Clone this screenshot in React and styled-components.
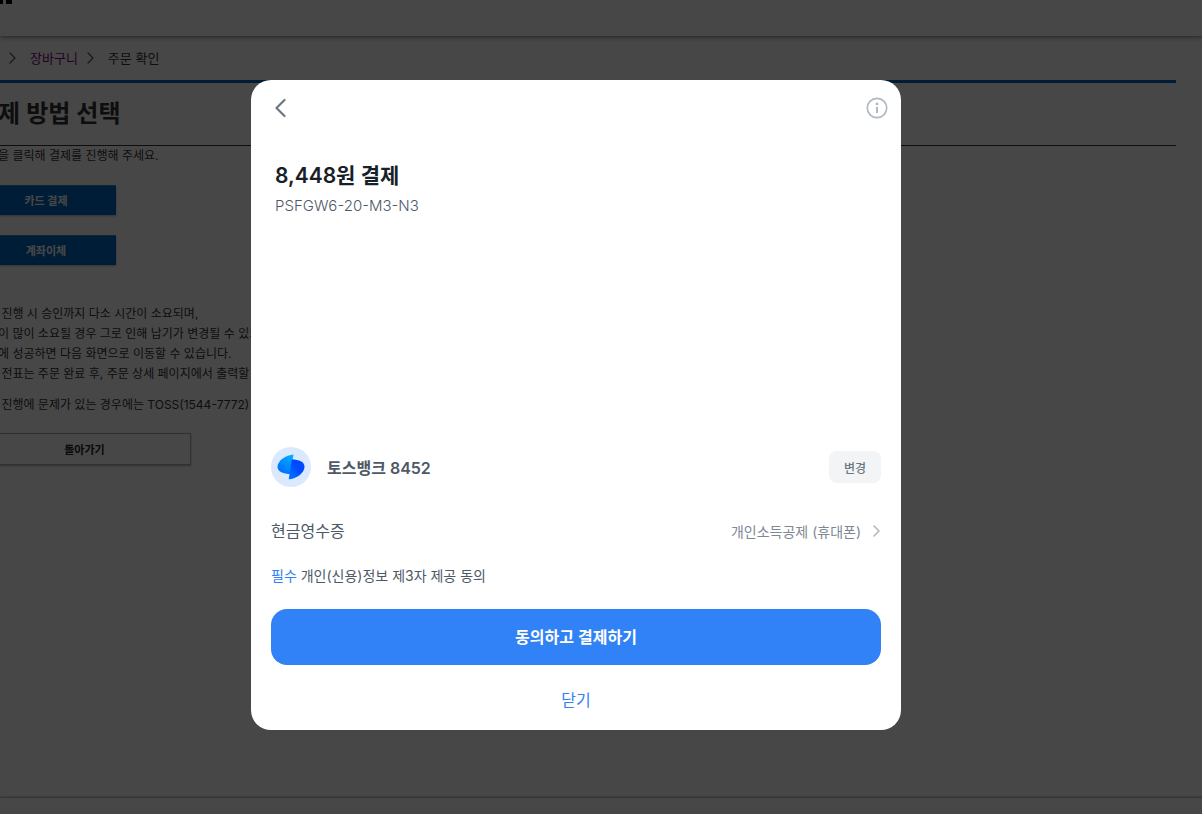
import styled, { createGlobalStyle } from 'styled-components';

const GlobalStyle = createGlobalStyle`
  * {
    box-sizing: border-box;
  }

  body {
    margin: 0;
    background: #fff;
    color: #333;
    font-family: Inter, "Noto Sans CJK KR", sans-serif;
    overflow: hidden;
  }

  h1, h2, p {
    margin: 0;
  }

  button {
    border: 0;
    padding: 0;
    background: none;
    font-family: inherit;
    cursor: pointer;
  }
`

const Page = styled.div`
  display: flex;
  flex-direction: column;
  min-height: 100vh;
`

const Header = styled.header`
  height: 36px;
  box-shadow: 0 1px 5px rgba(0, 0, 0, .5);

  svg {
    display: block;
  }
`

const Breadcrumb = styled.nav`
  display: flex;
  align-items: center;
  height: 44px;
  font-size: 13px;
  line-height: 20px;

  svg {
    margin: 0 13px 0 9px;
  }

  a {
    color: #800080;
    text-decoration: none;
  }
`

const Main = styled.main`
  flex: 1;
  margin: 0 26px 0 -2px;
  border-top: 3px solid #0068c6;
  font-size: 12px;
  white-space: pre;
`

const PageTitle = styled.h1`
  height: 63px;
  border-bottom: 1px solid #333;
  font-size: 24px;
  font-weight: 600;
  line-height: 62px;
`

const Guide = styled.p`
  line-height: 20px;
`

const PayMethods = styled.div`
  display: flex;
  flex-direction: column;
  align-items: flex-start;
  gap: 20px;
  margin: 19px 0 39px;
`

const PayButton = styled.button`
  width: 118px;
  height: 30px;
  padding: 0 22px 2px 0;
  border-top: 1px solid #4c84b0;
  background: #0068c6;
  box-shadow: 0 1px 2px rgba(0, 0, 0, .3);
  color: #fff;
  font-size: 11px;
  font-weight: 700;
`

const Notice = styled.p`
  margin-bottom: 11px;
  line-height: 20px;
`

const ReturnButton = styled.button`
  width: 193px;
  height: 32px;
  margin-top: 7px;
  padding-right: 20px;
  border: 1px solid #ababab;
  box-shadow: 0 1px 2px rgba(0, 0, 0, .3);
  color: #222;
  font-size: 11px;
  font-weight: 700;
`

const Footer = styled.footer`
  height: 16px;
  box-shadow: 0 -1px 2px rgba(0, 0, 0, .35);
`

const Overlay = styled.div`
  position: fixed;
  inset: 0;
  display: flex;
  align-items: center;
  justify-content: center;
  padding: 0 50px 4px 0;
  background: rgba(0, 0, 0, .72);
`

const Modal = styled.section`
  display: flex;
  flex-direction: column;
  width: 100%;
  max-width: 650px;
  min-height: 650px;
  padding: 12px 20px 14px;
  border-radius: 20px;
  background: #fff;
  color: #4e5968;
`

const ModalBar = styled.div`
  display: flex;
  justify-content: space-between;
  margin: 0 -8px 0 -4px;
`

const IconButton = styled.button`
  display: flex;
  align-items: center;
  justify-content: center;
  width: 24px;
  height: 32px;
`

const Summary = styled.div`
  flex: 1;
  padding: 35px 4px 0;
`

const Price = styled.h2`
  color: #191f28;
  font-size: 21px;
  font-weight: 600;
  line-height: 34px;
`

const Product = styled.p`
  font-size: 15px;
  font-weight: 300;
  line-height: 26px;
`

const Row = styled.div`
  display: flex;
  align-items: center;
  justify-content: space-between;
`

const Account = styled.div`
  display: flex;
  align-items: center;
  gap: 16px;
  font-size: 16px;
  font-weight: 600;
`

const ChangeButton = styled.button`
  width: 52px;
  height: 32px;
  border-radius: 8px;
  background: #f2f4f6;
  color: #6b7684;
  font-size: 12px;
  font-weight: 500;
`

const Receipt = styled(Row)`
  margin-top: 31px;
  font-size: 16px;
  line-height: 26px;
`

const ReceiptButton = styled.button`
  display: flex;
  align-items: center;
  gap: 12px;
  color: #7e8895;
  font-size: 14px;
`

const Agreement = styled.p`
  margin-top: 21px;
  font-size: 14px;
  line-height: 22px;

  span {
    color: #3182f6;
  }
`

const SubmitButton = styled.button`
  height: 56px;
  margin-top: 22px;
  padding-bottom: 2px;
  border-radius: 16px;
  background: #3182f6;
  color: #fff;
  font-size: 16px;
  font-weight: 600;
`

const CloseButton = styled.button`
  align-self: center;
  height: 32px;
  margin-top: 19px;
  padding: 0 12px 2px;
  color: #3182f6;
  font-size: 16px;
`

function Chevron({ color = '#555', stroke = 1.2 }) {
  return (
    <svg width="8" height="12" viewBox="1 0 8 12" fill="none" stroke={color} strokeWidth={stroke} aria-hidden="true">
      <path d="M2 1l5 5-5 5" strokeLinecap="round" strokeLinejoin="round" />
    </svg>
  );
}

function BankLogo() {
  return (
    <svg width="40" height="40" viewBox="0 0 40 40" aria-hidden="true">
      <defs>
        <linearGradient id="wingLeft" x1="1" y1="0" x2=".4" y2="1">
          <stop offset="0" stopColor="#00b4ff" />
          <stop offset="1" stopColor="#0070ff" />
        </linearGradient>
        <linearGradient id="wingRight" x1="0" y1="1" x2="1" y2="0">
          <stop offset="0" stopColor="#0078ff" />
          <stop offset=".6" stopColor="#0048ff" />
        </linearGradient>
      </defs>
      <circle cx="20" cy="20" r="20" fill="#dbe9ff" />
      <path d="M22.500 7.500C15 8 6.500 13.500 6.500 20c0 4.500 6 7 13 7z" fill="url(#wingLeft)" />
      <path d="M20.800 12.500C28 12.500 33.500 15 33.500 19.500c0 6.500-8 12.500-15.800 12.800z" fill="url(#wingRight)" />
    </svg>
  );
}

export default function App() {
  return (
    <>
      <GlobalStyle />
      <Page>
        <Header>
          <svg width="14" height="4" viewBox="0 0 14 4" aria-hidden="true">
            <path d="M0 0h3v4H0zM6 0h6v4H6z" fill="#000" />
          </svg>
        </Header>
        <Breadcrumb>
          <Chevron />
          <a href="#cart">장바구니</a>
          <Chevron />
          <span>주문 확인</span>
        </Breadcrumb>
        <Main>
          <PageTitle>제 방법 선택</PageTitle>
          <Guide>을 클릭해 결제를 진행해 주세요.</Guide>
          <PayMethods>
            <PayButton>카드 결제</PayButton>
            <PayButton>계좌이체</PayButton>
          </PayMethods>
          <Notice>
            {' 진행 시 승인까지 다소 시간이 소요되며,\n'}
            {'이 많이 소요될 경우 그로 인해 납기가 변경될 수 있으\n'}
            {'에 성공하면 다음 화면으로 이동할 수 있습니다.\n'}
            {' 전표는 주문 완료 후, 주문 상세 페이지에서 출력할'}
          </Notice>
          <Notice>{' 진행에 문제가 있는 경우에는 TOSS(1544-7772)'}</Notice>
          <ReturnButton>돌아가기</ReturnButton>
        </Main>
        <Footer />
      </Page>

      <Overlay>
        <Modal role="dialog" aria-modal="true" aria-labelledby="price">
          <ModalBar>
            <IconButton aria-label="뒤로">
              <svg width="24" height="24" viewBox="0 0 24 24" fill="none" stroke="#6b7684" strokeWidth="2.200" strokeLinecap="round" strokeLinejoin="round">
                <path d="M17.500 4L9.500 12l8 8" />
              </svg>
            </IconButton>
            <IconButton aria-label="안내">
              <svg width="24" height="24" viewBox="0 0 24 24" fill="none" stroke="#b0b8c1">
                <circle cx="12" cy="12" r="9.700" strokeWidth="1.700" />
                <path d="M12 11v6" strokeWidth="2" />
                <circle cx="12" cy="7.900" r="1.400" fill="#b0b8c1" stroke="none" />
              </svg>
            </IconButton>
          </ModalBar>
          <Summary>
            <Price id="price">8,448원 결제</Price>
            <Product>PSFGW6-20-M3-N3</Product>
          </Summary>
          <Row>
            <Account>
              <BankLogo />
              토스뱅크 8452
            </Account>
            <ChangeButton>변경</ChangeButton>
          </Row>
          <Receipt>
            <span>현금영수증</span>
            <ReceiptButton>
              개인소득공제 (휴대폰)
              <Chevron color="#b0b8c1" stroke={1.6} />
            </ReceiptButton>
          </Receipt>
          <Agreement>
            <span>필수</span> 개인(신용)정보 제3자 제공 동의
          </Agreement>
          <SubmitButton>동의하고 결제하기</SubmitButton>
          <CloseButton>닫기</CloseButton>
        </Modal>
      </Overlay>
    </>
  );
}
